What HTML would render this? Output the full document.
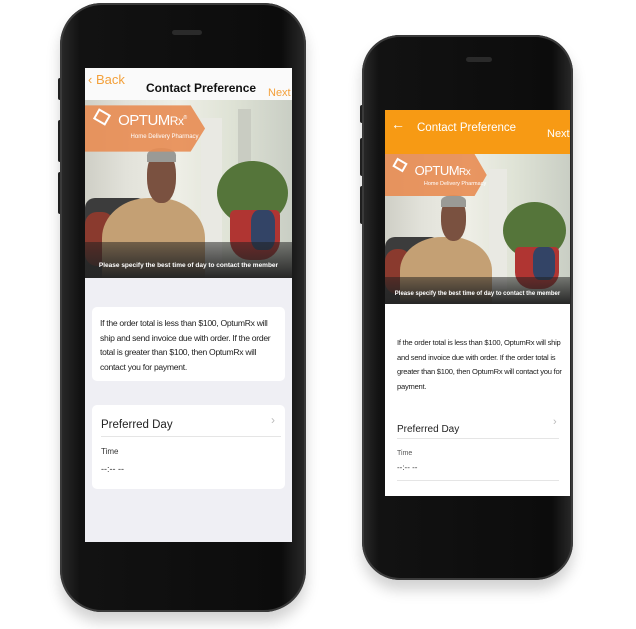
<!DOCTYPE html>
<html><head><meta charset="utf-8"><style>
*{box-sizing:border-box;margin:0;padding:0}
body{width:636px;height:629px;background:#fff;position:relative;overflow:hidden;font-family:"Liberation Sans",sans-serif}
.abs{position:absolute}
.body{position:absolute;background:linear-gradient(90deg,#2a2a2a,#121212 8%,#0c0c0c 90%,#2a2a2a);border-radius:42px;box-shadow:0 10px 14px rgba(0,0,0,.18),inset 0 0 0 2px #3a3a3a}
.btn{position:absolute;background:#222;border-radius:2px;width:5px}
.screen{position:absolute;overflow:hidden;background:#efeff4}
.photo{position:absolute;left:0;width:100%;overflow:hidden;background:linear-gradient(90deg,#cfcfc6 0%,#e2e2da 20%,#eeeee6 45%,#dfe3d6 70%,#c9cec4 100%)}
.photo div{position:absolute}
.cap{color:#fff;font-weight:bold;text-align:center;white-space:nowrap}
.nw{white-space:nowrap}
</style></head><body>

<!-- PHONE 1 -->
<div class="btn" style="left:58px;top:78px;height:22px"></div>
<div class="btn" style="left:58px;top:120px;height:42px"></div>
<div class="btn" style="left:58px;top:172px;height:42px"></div>
<div class="body" style="left:60px;top:3px;width:246px;height:609px"></div>
<div class="abs" style="left:172px;top:30px;width:30px;height:5px;background:#2a2a2a;border-radius:3px"></div>
<div class="screen" style="left:85px;top:68px;width:207px;height:474px">
  <div class="abs" style="left:0;top:0;width:100%;height:32px;background:#fafafa">
    <div class="abs" style="left:3px;top:4px;color:#f3a03a;font-size:13px">&#8249; Back</div>
    <div class="abs" style="left:61px;top:13px;font-size:12px;font-weight:bold;color:#111">Contact Preference</div>
    <div class="abs" style="left:183px;top:19px;color:#f3a03a;font-size:11px">Next</div>
  </div>
  <div class="photo" style="top:32px;height:178px">
    <div style="left:0;top:55%;width:30%;height:45%;background:#3c3c3c;border-radius:10px 10px 0 0"></div>
    <div style="left:0;top:63%;width:14%;height:30%;background:#8a3a2e;border-radius:12px"></div>
    <div style="left:56%;top:10%;width:10%;height:80%;background:#e9e9e3"></div>
    <div style="left:74%;top:5%;width:6%;height:80%;background:#c9ccc2"></div>
    <div style="left:8%;top:55%;width:50%;height:50%;background:#c4a074;border-radius:45% 45% 10% 10%"></div>
    <div style="left:30%;top:28%;width:14%;height:30%;background:#7a5140;border-radius:45%"></div>
    <div style="left:30%;top:27%;width:14%;height:8%;background:#9a9a96;border-radius:50% 50% 0 0"></div>
    <div style="left:64%;top:34%;width:34%;height:36%;background:#55753a;border-radius:50%"></div>
    <div style="left:70%;top:62%;width:24%;height:28%;background:#b03532;border-radius:10% 10% 40% 40%"></div>
    <div style="left:80%;top:62%;width:12%;height:22%;background:#334466;border-radius:30%"></div>
    <div style="left:0;top:80%;width:100%;height:20%;background:linear-gradient(180deg,rgba(30,30,30,.5),#262626)"></div>
    <div style="left:0;top:3%;width:58%;height:26%;background:rgba(232,140,82,.9);clip-path:polygon(0 0,88% 0,100% 50%,88% 100%,0 100%)"></div>
    <div style="left:5%;top:6%;width:14px;height:12px;border:2px solid #fff;transform:rotate(30deg)"></div>
    <div style="left:16%;top:7%;color:#fff;font-size:15px;letter-spacing:-.5px">OPTUM<span style="font-size:12px">Rx</span><sup style="font-size:5px">®</sup></div>
    <div style="left:22%;top:19%;color:#fff;font-size:6px">Home Delivery Pharmacy</div>
    <div class="cap" style="left:0;top:91%;width:100%;font-size:6.5px">Please specify the best time of day to contact the member</div>
  </div>
  <div class="abs nw" style="left:7px;top:239px;width:193px;height:74px;background:#fff;border-radius:5px;padding:9px 8px;font-size:8.6px;line-height:14.5px;letter-spacing:-.3px;color:#222">If the order total is less than $100, OptumRx will<br>ship and send invoice due with order. If the order<br>total is greater than $100, then OptumRx will<br>contact you for payment.</div>
  <div class="abs" style="left:7px;top:337px;width:193px;height:84px;background:#fff;border-radius:5px">
    <div class="abs" style="left:9px;top:14px;font-size:11.5px;color:#222">Preferred Day</div>
    <div class="abs" style="right:10px;top:8px;font-size:12px;color:#bbb">&#8250;</div>
    <div class="abs" style="left:9px;top:31px;width:180px;height:1px;background:#e5e5e5"></div>
    <div class="abs" style="left:9px;top:42px;font-size:8px;color:#333">Time</div>
    <div class="abs" style="left:9px;top:59px;font-size:9px;color:#333">--:-- --</div>
  </div>
</div>

<!-- PHONE 2 -->
<div class="btn" style="left:360px;top:105px;height:18px"></div>
<div class="btn" style="left:360px;top:138px;height:38px"></div>
<div class="btn" style="left:360px;top:186px;height:38px"></div>
<div class="body" style="left:362px;top:35px;width:211px;height:545px;border-radius:38px"></div>
<div class="abs" style="left:466px;top:57px;width:26px;height:5px;background:#2a2a2a;border-radius:3px"></div>
<div class="screen" style="left:385px;top:110px;width:185px;height:386px;background:#fff">
  <div class="abs" style="left:0;top:0;width:100%;height:44px;background:#f79a14">
    <div class="abs" style="left:6px;top:6px;color:#fff;font-size:14px">&#8592;</div>
    <div class="abs" style="left:32px;top:12px;color:#fff;font-size:11.5px">Contact Preference</div>
    <div class="abs" style="left:162px;top:18px;color:#fff;font-size:11px">Next</div>
  </div>
  <div class="photo" style="top:44px;height:150px">
    <div style="left:0;top:55%;width:30%;height:45%;background:#3c3c3c;border-radius:10px 10px 0 0"></div>
    <div style="left:0;top:63%;width:14%;height:30%;background:#8a3a2e;border-radius:12px"></div>
    <div style="left:56%;top:10%;width:10%;height:80%;background:#e9e9e3"></div>
    <div style="left:8%;top:55%;width:50%;height:50%;background:#c4a074;border-radius:45% 45% 10% 10%"></div>
    <div style="left:30%;top:28%;width:14%;height:30%;background:#7a5140;border-radius:45%"></div>
    <div style="left:30%;top:27%;width:14%;height:8%;background:#9a9a96;border-radius:50% 50% 0 0"></div>
    <div style="left:64%;top:32%;width:34%;height:38%;background:#55753a;border-radius:50%"></div>
    <div style="left:70%;top:62%;width:24%;height:28%;background:#b03532;border-radius:10% 10% 40% 40%"></div>
    <div style="left:80%;top:62%;width:12%;height:22%;background:#334466;border-radius:30%"></div>
    <div style="left:0;top:82%;width:100%;height:18%;background:linear-gradient(180deg,rgba(30,30,30,.5),#262626)"></div>
    <div style="left:0;top:0;width:55%;height:28%;background:rgba(232,140,82,.9);clip-path:polygon(0 0,88% 0,100% 50%,88% 100%,0 100%)"></div>
    <div style="left:5%;top:4%;width:12px;height:10px;border:2px solid #fff;transform:rotate(30deg)"></div>
    <div style="left:16%;top:6%;color:#fff;font-size:13px;letter-spacing:-.5px">OPTUM<span style="font-size:10px">Rx</span></div>
    <div style="left:21%;top:18%;color:#fff;font-size:5.5px">Home Delivery Pharmacy</div>
    <div class="cap" style="left:0;top:91%;width:100%;font-size:6px">Please specify the best time of day to contact the member</div>
  </div>
  <div class="abs nw" style="left:12px;top:226px;font-size:7.6px;line-height:14.5px;letter-spacing:-.25px;color:#222">If the order total is less than $100, OptumRx will ship<br>and send invoice due with order. If the order total is<br>greater than $100, then OptumRx will contact you for<br>payment.</div>
  <div class="abs" style="left:12px;top:314px;font-size:10px;color:#222">Preferred Day</div>
  <div class="abs" style="left:168px;top:306px;font-size:11px;color:#bbb">&#8250;</div>
  <div class="abs" style="left:12px;top:328px;width:162px;height:1px;background:#e5e5e5"></div>
  <div class="abs" style="left:12px;top:340px;font-size:7px;color:#555">Time</div>
  <div class="abs" style="left:12px;top:353px;font-size:8px;color:#333">--:-- --</div>
  <div class="abs" style="left:12px;top:370px;width:162px;height:1px;background:#e5e5e5"></div>
</div>
</body></html>
